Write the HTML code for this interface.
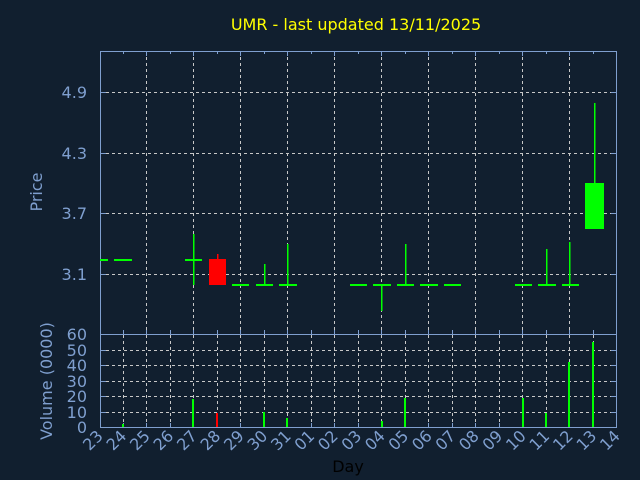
<!DOCTYPE html>
<html><head><meta charset="utf-8"><style>
html,body{margin:0;padding:0;background:#111f2f;}
svg{display:block;}
text{font-family:"DejaVu Sans","Liberation Sans",sans-serif;}
</style></head><body>
<svg width="640" height="480" viewBox="0 0 640 480" xmlns="http://www.w3.org/2000/svg">
<rect width="640" height="480" fill="#111f2f"/>
<text x="356" y="30" fill="#ffff00" font-size="16" text-anchor="middle">UMR - last updated 13/11/2025</text>
<g stroke="#c8c8c8" stroke-width="1" stroke-dasharray="3,3">
<line x1="146.5" y1="51" x2="146.5" y2="334"/><line x1="193.5" y1="51" x2="193.5" y2="334"/>
<line x1="240.5" y1="51" x2="240.5" y2="334"/><line x1="287.5" y1="51" x2="287.5" y2="334"/>
<line x1="334.5" y1="51" x2="334.5" y2="334"/><line x1="381.5" y1="51" x2="381.5" y2="334"/>
<line x1="428.5" y1="51" x2="428.5" y2="334"/><line x1="475.5" y1="51" x2="475.5" y2="334"/>
<line x1="522.5" y1="51" x2="522.5" y2="334"/><line x1="569.5" y1="51" x2="569.5" y2="334"/>
<line x1="100" y1="92.5" x2="617" y2="92.5"/><line x1="100" y1="153.5" x2="617" y2="153.5"/>
<line x1="100" y1="213.5" x2="617" y2="213.5"/><line x1="100" y1="274.5" x2="617" y2="274.5"/>
<line x1="100" y1="350.5" x2="617" y2="350.5"/><line x1="100" y1="365.5" x2="617" y2="365.5"/>
<line x1="100" y1="381.5" x2="617" y2="381.5"/><line x1="100" y1="396.5" x2="617" y2="396.5"/>
<line x1="100" y1="412.5" x2="617" y2="412.5"/>
</g>
<g stroke="#c8c8c8" stroke-dasharray="3,3">
<line x1="123.5" y1="335" x2="123.5" y2="427"/><line x1="146.5" y1="335" x2="146.5" y2="427"/><line x1="170.5" y1="335" x2="170.5" y2="427"/><line x1="193.5" y1="335" x2="193.5" y2="427"/><line x1="217.5" y1="335" x2="217.5" y2="427"/><line x1="240.5" y1="335" x2="240.5" y2="427"/><line x1="264.5" y1="335" x2="264.5" y2="427"/><line x1="287.5" y1="335" x2="287.5" y2="427"/><line x1="311.5" y1="335" x2="311.5" y2="427"/><line x1="334.5" y1="335" x2="334.5" y2="427"/><line x1="358.5" y1="335" x2="358.5" y2="427"/><line x1="381.5" y1="335" x2="381.5" y2="427"/><line x1="405.5" y1="335" x2="405.5" y2="427"/><line x1="428.5" y1="335" x2="428.5" y2="427"/><line x1="452.5" y1="335" x2="452.5" y2="427"/><line x1="475.5" y1="335" x2="475.5" y2="427"/><line x1="499.5" y1="335" x2="499.5" y2="427"/><line x1="522.5" y1="335" x2="522.5" y2="427"/><line x1="546.5" y1="335" x2="546.5" y2="427"/><line x1="569.5" y1="335" x2="569.5" y2="427"/><line x1="593.5" y1="335" x2="593.5" y2="427"/>
</g>
<g stroke="#7f9fcf" fill="none">
<rect x="100.5" y="51.5" width="516" height="283"/>
<rect x="100.5" y="334.5" width="516" height="93"/>
<path d="M100 92.5h6M611 92.5h6M100 153.5h6M611 153.5h6M100 213.5h6M611 213.5h6M100 274.5h6M611 274.5h6M100 350.5h6M611 350.5h6M100 365.5h6M611 365.5h6M100 381.5h6M611 381.5h6M100 396.5h6M611 396.5h6M100 412.5h6M611 412.5h6"/>
<path d="M123.5 51v3M146.5 51v5M170.5 51v3M193.5 51v5M217.5 51v3M240.5 51v5M264.5 51v3M287.5 51v5M311.5 51v3M334.5 51v5M358.5 51v3M381.5 51v5M405.5 51v3M428.5 51v5M452.5 51v3M475.5 51v5M499.5 51v3M522.5 51v5M546.5 51v3M569.5 51v5M593.5 51v3"/>
<path d="M123.5 427v-4M146.5 427v-4M170.5 427v-4M193.5 427v-4M217.5 427v-4M240.5 427v-4M264.5 427v-4M287.5 427v-4M311.5 427v-4M334.5 427v-4M358.5 427v-4M381.5 427v-4M405.5 427v-4M428.5 427v-4M452.5 427v-4M475.5 427v-4M499.5 427v-4M522.5 427v-4M546.5 427v-4M569.5 427v-4M593.5 427v-4"/>
<path d="M123.5 334v-4M146.5 334v-4M170.5 334v-4M193.5 334v-4M217.5 334v-4M240.5 334v-4M264.5 334v-4M287.5 334v-4M311.5 334v-4M334.5 334v-4M358.5 334v-4M381.5 334v-4M405.5 334v-4M428.5 334v-4M452.5 334v-4M475.5 334v-4M499.5 334v-4M522.5 334v-4M546.5 334v-4M569.5 334v-4M593.5 334v-4"/>
</g>
<!-- candles -->
<g fill="#00ff00">
<rect x="100" y="259" width="8" height="2"/><rect x="114" y="259" width="18" height="2"/><rect x="185" y="259" width="17" height="2"/>
<rect x="232" y="284" width="17" height="2"/><rect x="256" y="284" width="17" height="2"/><rect x="279" y="284" width="18" height="2"/>
<rect x="350" y="284" width="17" height="2"/><rect x="373" y="284" width="18" height="2"/><rect x="397" y="284" width="17" height="2"/>
<rect x="420" y="284" width="18" height="2"/><rect x="444" y="284" width="17" height="2"/><rect x="515" y="284" width="17" height="2"/>
<rect x="538" y="284" width="18" height="2"/><rect x="562" y="284" width="17" height="2"/>
<rect x="193" y="234" width="1.5" height="51"/><rect x="264" y="264" width="1.5" height="21"/><rect x="287" y="244" width="1.5" height="41"/>
<rect x="381" y="285" width="1.5" height="26"/><rect x="405" y="244" width="1.5" height="41"/><rect x="546" y="249" width="1.5" height="36"/>
<rect x="569" y="242" width="1.5" height="43"/><rect x="594" y="103" width="1.5" height="80"/>
<rect x="585" y="183" width="19" height="46"/>
<!-- volume -->
<rect x="122" y="424" width="2" height="3"/><rect x="192" y="399" width="2" height="28"/><rect x="263" y="412" width="2" height="15"/>
<rect x="286" y="418" width="2" height="9"/><rect x="381" y="421" width="2" height="6"/><rect x="404" y="398" width="2" height="29"/>
<rect x="522" y="398" width="2" height="29"/><rect x="545" y="413" width="2" height="14"/><rect x="568" y="362" width="2" height="65"/>
<rect x="592" y="342" width="2" height="85"/>
</g>
<g fill="#ff0000">
<rect x="217" y="254" width="1.5" height="5"/>
<rect x="209" y="259" width="17" height="26"/>
<rect x="216" y="413" width="2" height="14"/>
</g>
<g fill="#7f9fcf" font-size="16" text-anchor="end">
<text x="87" y="98">4.9</text><text x="87" y="159">4.3</text><text x="87" y="219">3.7</text><text x="87" y="280">3.1</text>
<text x="87" y="340">60</text><text x="87" y="356">50</text><text x="87" y="371">40</text><text x="87" y="387">30</text><text x="87" y="402">20</text><text x="87" y="418">10</text><text x="87" y="433">0</text>
</g>
<g fill="#7f9fcf" font-size="16" text-anchor="middle">
<text transform="translate(42,192) rotate(-90)">Price</text>
<text transform="translate(52,381) rotate(-90)">Volume (0000)</text>
</g>
<g fill="#7f9fcf" font-size="16" text-anchor="end">
<text transform="translate(104,437) rotate(-45)">23</text>
<text transform="translate(127.5,437) rotate(-45)">24</text>
<text transform="translate(151,437) rotate(-45)">25</text>
<text transform="translate(174.5,437) rotate(-45)">26</text>
<text transform="translate(198,437) rotate(-45)">27</text>
<text transform="translate(221.5,437) rotate(-45)">28</text>
<text transform="translate(245,437) rotate(-45)">29</text>
<text transform="translate(268.5,437) rotate(-45)">30</text>
<text transform="translate(292,437) rotate(-45)">31</text>
<text transform="translate(315.5,437) rotate(-45)">01</text>
<text transform="translate(339,437) rotate(-45)">02</text>
<text transform="translate(362.5,437) rotate(-45)">03</text>
<text transform="translate(386,437) rotate(-45)">04</text>
<text transform="translate(409.5,437) rotate(-45)">05</text>
<text transform="translate(433,437) rotate(-45)">06</text>
<text transform="translate(456.5,437) rotate(-45)">07</text>
<text transform="translate(480,437) rotate(-45)">08</text>
<text transform="translate(503.5,437) rotate(-45)">09</text>
<text transform="translate(527,437) rotate(-45)">10</text>
<text transform="translate(550.5,437) rotate(-45)">11</text>
<text transform="translate(574,437) rotate(-45)">12</text>
<text transform="translate(597.5,437) rotate(-45)">13</text>
<text transform="translate(621,437) rotate(-45)">14</text>
</g>
<text x="348" y="472" fill="#000000" font-size="16" text-anchor="middle">Day</text>
</svg>
</body></html>
